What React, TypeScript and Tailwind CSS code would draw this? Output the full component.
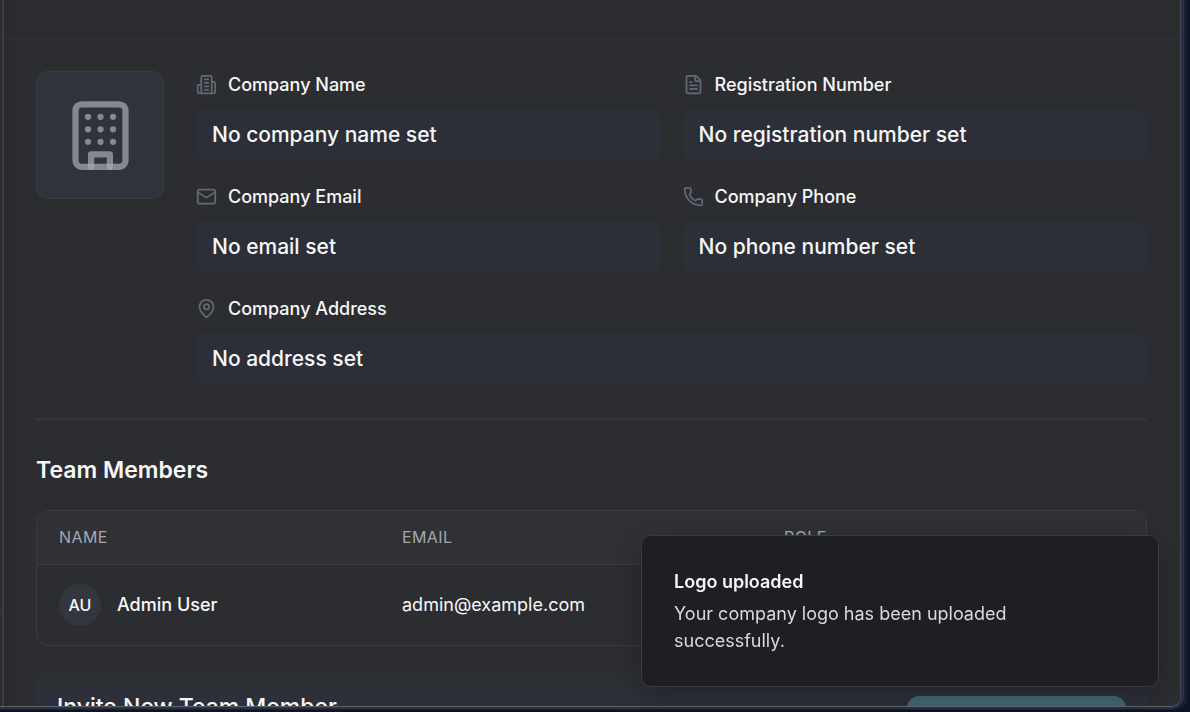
import type { ReactNode } from "react";
import { FileText, Mail, MapPin, Phone } from "lucide-react";

function LogoIcon() {
  return (
    <svg viewBox="0 0 24 24" className="size-[75px] text-[#a8adb6]/70" fill="none" stroke="currentColor" strokeWidth="2" strokeLinecap="round" strokeLinejoin="round" aria-hidden="true">
      <rect x="4" y="2" width="16" height="20" rx="2" />
      <path d="M9 22v-4h6v4" />
      <path d="M8 6h.01M12 6h.01M16 6h.01M8 10h.01M12 10h.01M16 10h.01M8 14h.01M12 14h.01M16 14h.01" />
    </svg>
  );
}

function OfficeIcon() {
  return (
    <svg viewBox="0 0 24 24" className="size-[21px]" fill="none" stroke="currentColor" strokeWidth="2" strokeLinecap="round" strokeLinejoin="round" aria-hidden="true">
      <path d="M6 22V4a2 2 0 0 1 2-2h8a2 2 0 0 1 2 2v18Z" />
      <path d="M6 12H4a2 2 0 0 0-2 2v6a2 2 0 0 0 2 2h2" />
      <path d="M18 9h2a2 2 0 0 1 2 2v9a2 2 0 0 1-2 2h-2" />
      <path d="M10 6h4M10 10h4M10 14h4M10 18h4" />
    </svg>
  );
}

type FieldProps = { icon: ReactNode; label: string; value: string; wide?: boolean };

function Field({ icon, label, value, wide }: FieldProps) {
  return (
    <div className={wide ? "col-span-2" : ""}>
      <dt className="flex h-[27px] items-center gap-[11px] text-lg leading-[27px] font-medium">
        <span className="text-[#626875]">{icon}</span>
        {label}
      </dt>
      <dd className="mt-2.5 flex h-[54px] items-center rounded-[10px] bg-[#2c2f37] px-4 text-[21px] font-medium">
        {value}
      </dd>
    </div>
  );
}

export default function App() {
  return (
    <div className="flex h-screen overflow-hidden bg-[#0e1424] font-['Inter',sans-serif] text-[#f7f7f8]">
      <div className="mr-[3px] mb-0.5 flex min-w-0 flex-1 rounded-br-xl border-r-[3px] border-b border-[#1a1f31]">
        <div className="flex min-w-0 flex-1 rounded-br-xl border-r-[3px] border-b-2 border-[#2b3047] bg-[#2b3047]">
          <div className="flex min-w-0 flex-1 overflow-hidden rounded-br-[10px] border-r border-b border-r-[#44464d] border-b-[#616266] bg-[#2c2d31]">
            <aside className="flex w-1 shrink-0 flex-col justify-end border-r-2 border-[#3b3d48]">
              <div className="h-24 border-t border-[#3b3d44]" />
            </aside>
            <main className="min-w-0 flex-1 overflow-hidden bg-linear-to-r from-[#292a2e] to-[#2c2d31] to-[24px]">
              <header className="h-[39px] border-b border-[#333439]" />
              <div className="pt-8 pr-[33px] pl-8">
                <section className="flex gap-8 border-b-2 border-[#34363b] pb-8">
                  <div className="flex size-32 shrink-0 items-center justify-center rounded-xl border border-[#3a3d45] bg-[#30333b]">
                    <LogoIcon />
                  </div>
                  <dl className="grid min-w-0 flex-1 grid-cols-2 gap-x-[22px] gap-y-[21px]">
                    <Field icon={<OfficeIcon />} label="Company Name" value="No company name set" />
                    <Field icon={<FileText size={21} />} label="Registration Number" value="No registration number set" />
                    <Field icon={<Mail size={21} />} label="Company Email" value="No email set" />
                    <Field icon={<Phone size={21} />} label="Company Phone" value="No phone number set" />
                    <Field icon={<MapPin size={21} />} label="Company Address" value="No address set" wide />
                  </dl>
                </section>

                <section className="pt-8">
                  <h2 className="text-[23px] leading-9 font-semibold">Team Members</h2>
                  <div className="mt-[22px] overflow-hidden rounded-xl border border-[#3a3c43]">
                    <table className="w-full table-fixed text-left">
                      <thead>
                        <tr className="h-[53px] border-b border-[#3a3c42] bg-[#303136] text-base tracking-wide text-[#a3a8ae]">
                          <th scope="col" className="w-[343px] px-[22px] font-normal">NAME</th>
                          <th scope="col" className="w-[382px] px-[22px] font-normal">EMAIL</th>
                          <th scope="col" className="px-[22px] font-normal">ROLE</th>
                        </tr>
                      </thead>
                      <tbody>
                        <tr className="h-[81px] text-lg">
                          <td className="px-[22px] font-medium">
                            <div className="flex items-center gap-4">
                              <span className="flex size-[42px] items-center justify-center rounded-full bg-[#33363e] text-base">AU</span>
                              Admin User
                            </div>
                          </td>
                          <td className="px-[22px]">admin@example.com</td>
                          <td />
                        </tr>
                      </tbody>
                    </table>
                  </div>
                </section>

                <section className="mt-[21px] flex items-start justify-between rounded-xl bg-linear-to-b from-[#2c2e32] to-[#2d3039] to-[30px] px-[21px] pt-6 pb-6">
                  <h2 className="text-[23px] leading-8 font-medium">Invite New Team Member</h2>
                  <button type="button" aria-label="Invite member" className="mt-[5px] h-[53px] w-[219px] rounded-xl bg-[#436671]" />
                </section>
              </div>
            </main>
          </div>
        </div>
      </div>

      <div role="status" className="fixed right-[31px] bottom-[25px] w-[518px] rounded-[10px] border border-[#393b44] bg-[#1e1f22] px-8 py-8 shadow-[0_10px_28px_rgba(0,0,0,0.22)]">
        <p className="text-lg leading-[27px] font-semibold">Logo uploaded</p>
        <p className="mt-[5px] mr-16 text-lg leading-[27px] text-[#dadadb]">Your company logo has been uploaded successfully.</p>
      </div>
    </div>
  );
}
